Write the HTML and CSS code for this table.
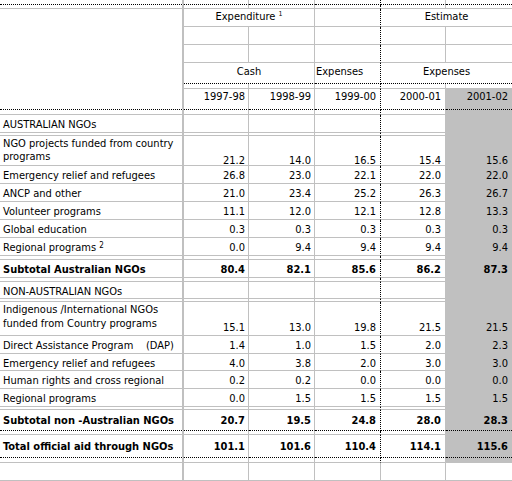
FILE: index.html
```html
<!DOCTYPE html>
<html>
<head>
<meta charset="utf-8">
<link rel="stylesheet" href="styles.css">
</head>
<body>
<div class="sheet">
  <div class="row dot sp"><div class="c k0"></div><div class="c"></div><div class="c"></div><div class="c k3"></div><div class="c k4"></div><div class="c k5"></div></div>
  <div class="row sp"><div class="c k0"></div><div class="c"></div><div class="c"></div><div class="c k3"></div><div class="c k4"></div><div class="c k5"></div></div>
  <div class="row r-c"><div class="c k0 head dbot"></div><div class="c span2 ctr">Expenditure <span class="sup1">1</span></div><div class="c k3"></div><div class="c k5 span2 ctr">Estimate</div></div>
  <div class="row"><div class="c"></div><div class="c"></div><div class="c k3"></div><div class="c k4"></div><div class="c k5"></div></div>
  <div class="row"><div class="c"></div><div class="c"></div><div class="c k3"></div><div class="c k4"></div><div class="c k5"></div></div>
  <div class="row dot r-f"><div class="c span2 ctr">Cash</div><div class="c k3 lft">Expenses</div><div class="c k5 span2 ctr">Expenses</div></div>
  <div class="row sp"><div class="c"></div><div class="c"></div><div class="c k3"></div><div class="c k4"></div><div class="c k5"></div></div>
  <div class="row dot r-h"><div class="c">1997-98</div><div class="c">1998-99</div><div class="c k3">1999-00</div><div class="c k4">2000-01</div><div class="c k5 g">2001-02</div></div>
  <div class="row sp"><div class="c k0"></div><div class="c"></div><div class="c"></div><div class="c k3"></div><div class="c k4"></div><div class="c k5 g"></div></div>
  <div class="row"><div class="c k0">AUSTRALIAN NGOs</div><div class="c"></div><div class="c"></div><div class="c k3"></div><div class="c k4"></div><div class="c k5 g"></div></div>
  <div class="row sp"><div class="c k0"></div><div class="c"></div><div class="c"></div><div class="c k3"></div><div class="c k4"></div><div class="c k5 g"></div></div>
  <div class="row r-2"><div class="c k0">NGO projects funded from country<br>programs</div><div class="c">21.2</div><div class="c">14.0</div><div class="c k3">16.5</div><div class="c k4">15.4</div><div class="c k5 g">15.6</div></div>
  <div class="row"><div class="c k0">Emergency relief and refugees</div><div class="c">26.8</div><div class="c">23.0</div><div class="c k3">22.1</div><div class="c k4">22.0</div><div class="c k5 g">22.0</div></div>
  <div class="row"><div class="c k0">ANCP and other</div><div class="c">21.0</div><div class="c">23.4</div><div class="c k3">25.2</div><div class="c k4">26.3</div><div class="c k5 g">26.7</div></div>
  <div class="row"><div class="c k0">Volunteer programs</div><div class="c">11.1</div><div class="c">12.0</div><div class="c k3">12.1</div><div class="c k4">12.8</div><div class="c k5 g">13.3</div></div>
  <div class="row"><div class="c k0">Global education</div><div class="c">0.3</div><div class="c">0.3</div><div class="c k3">0.3</div><div class="c k4">0.3</div><div class="c k5 g">0.3</div></div>
  <div class="row"><div class="c k0">Regional programs <span class="sup2">2</span></div><div class="c">0.0</div><div class="c">9.4</div><div class="c k3">9.4</div><div class="c k4">9.4</div><div class="c k5 g">9.4</div></div>
  <div class="row sp"><div class="c k0"></div><div class="c"></div><div class="c"></div><div class="c k3"></div><div class="c k4"></div><div class="c k5 g"></div></div>
  <div class="row bold r-s"><div class="c k0">Subtotal Australian NGOs</div><div class="c">80.4</div><div class="c">82.1</div><div class="c k3">85.6</div><div class="c k4">86.2</div><div class="c k5 g">87.3</div></div>
  <div class="row sp"><div class="c k0"></div><div class="c"></div><div class="c"></div><div class="c k3"></div><div class="c k4"></div><div class="c k5 g"></div></div>
  <div class="row"><div class="c k0">NON-AUSTRALIAN NGOs</div><div class="c"></div><div class="c"></div><div class="c k3"></div><div class="c k4"></div><div class="c k5 g"></div></div>
  <div class="row sp"><div class="c k0"></div><div class="c"></div><div class="c"></div><div class="c k3"></div><div class="c k4"></div><div class="c k5 g"></div></div>
  <div class="row r-2 r-w"><div class="c k0">Indigenous /International NGOs<br>funded from Country programs</div><div class="c">15.1</div><div class="c">13.0</div><div class="c k3">19.8</div><div class="c k4">21.5</div><div class="c k5 g">21.5</div></div>
  <div class="row"><div class="c k0 pre">Direct Assistance Program    (DAP)</div><div class="c">1.4</div><div class="c">1.0</div><div class="c k3">1.5</div><div class="c k4">2.0</div><div class="c k5 g">2.3</div></div>
  <div class="row"><div class="c k0">Emergency relief and refugees</div><div class="c">4.0</div><div class="c">3.8</div><div class="c k3">2.0</div><div class="c k4">3.0</div><div class="c k5 g">3.0</div></div>
  <div class="row"><div class="c k0">Human rights and cross regional</div><div class="c">0.2</div><div class="c">0.2</div><div class="c k3">0.0</div><div class="c k4">0.0</div><div class="c k5 g">0.0</div></div>
  <div class="row"><div class="c k0">Regional programs</div><div class="c">0.0</div><div class="c">1.5</div><div class="c k3">1.5</div><div class="c k4">1.5</div><div class="c k5 g">1.5</div></div>
  <div class="row sp"><div class="c k0"></div><div class="c"></div><div class="c"></div><div class="c k3"></div><div class="c k4"></div><div class="c k5 g"></div></div>
  <div class="row dot bold r-sub2"><div class="c k0">Subtotal non -Australian NGOs</div><div class="c">20.7</div><div class="c">19.5</div><div class="c k3">24.8</div><div class="c k4">28.0</div><div class="c k5 g">28.3</div></div>
  <div class="row sp"><div class="c k0"></div><div class="c"></div><div class="c"></div><div class="c k3"></div><div class="c k4"></div><div class="c k5 g"></div></div>
  <div class="row dot bold r-tot"><div class="c k0">Total official aid through NGOs</div><div class="c">101.1</div><div class="c">101.6</div><div class="c k3">110.4</div><div class="c k4">114.1</div><div class="c k5 g">115.6</div></div>
  <div class="row sp"><div class="c k0"></div><div class="c"></div><div class="c"></div><div class="c k3"></div><div class="c k4"></div><div class="c k5 g"></div></div>
  <div class="row last"><div class="c k0"></div><div class="c"></div><div class="c"></div><div class="c k3"></div><div class="c k4"></div><div class="c k5"></div></div>
</div>
</body>
</html>
```
FILE: styles.css
```css
html, body {
  margin: 0;
  padding: 0;
  background: #fff;
}
body {
  font-family: "DejaVu Sans Condensed", "DejaVu Sans", "Liberation Sans", sans-serif;
  font-stretch: condensed;
  font-size: 11px;
  color: #000;
}
.sheet {
  display: grid;
  grid-template-columns: 184px 65px 66px 66px 65px 66px;
  grid-template-rows: 5px 4px 18px 18px 18px 21px 5px 21px 5px 18px 3px 30px 18px 18px 18px 18px 18px 4px 18px 4px 17px 3px 34px 18px 17px 18px 18px 3px 21px 4px 23px 5px 18px;
  width: 512px;
  height: 481px;
  overflow: hidden;
}
.row { display: contents; }
.c {
  box-sizing: border-box;
  border-right: 1px solid #c0c0c0;
  border-bottom: 1px solid #c0c0c0;
  overflow: hidden;
  white-space: nowrap;
  line-height: 13px;
  padding: 3px 3px 0 0;
  text-align: right;
}
.k0 {
  border-right-width: 2px;
  text-align: left;
  padding-left: 3px;
}
.k3 { border-right: 1px dotted #000; padding-right: 4px; }
.k4 { padding-right: 4px; }
.k5 { border-right: 0; padding-right: 4px; }
.g { background: #c0c0c0; }
.dot > .c, .dbot { border-bottom: 1px dotted #000; }
.span2 { grid-column: span 2; }
.head { grid-row: span 6; }
.ctr { text-align: center; padding-right: 0; }
.lft { text-align: left; padding-left: 1px; }
.pre { white-space: pre; }
.bold > .c { font-weight: bold; }
.sp > .c { padding: 0; }
.r-c > .c { padding-top: 1px; }
.r-f > .c { padding-top: 2px; }
.r-h > .c { padding-top: 1px; }
.r-2 > .c { padding-top: 18px; }
.r-2 > .k0 { padding-top: 1px; }
.r-w > .c { padding-top: 19px; }
.r-w > .k0 { padding-top: 1px; line-height: 14px; }
.r-s > .c { padding-top: 3px; }
.r-sub2 > .c { padding-top: 4px; }
.r-tot > .c { padding-top: 5px; }
.last > .k3 { border-right: 1px solid #c0c0c0; }
.sup1 {
  position: relative;
  top: -4px;
  font-size: 7px;
}
.sup2 {
  position: relative;
  top: -3px;
  font-size: 8px;
}
```
